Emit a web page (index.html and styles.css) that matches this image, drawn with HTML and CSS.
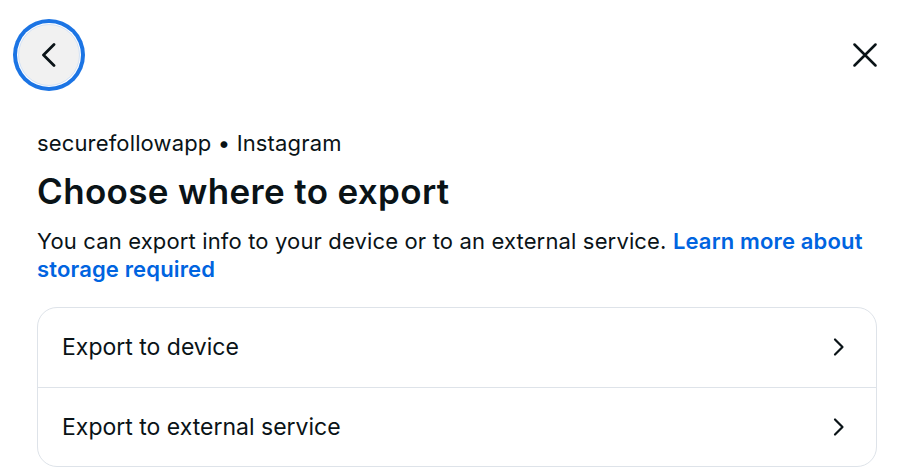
FILE: index.html
```html
<!DOCTYPE html>
<html lang="en">
<head>
<meta charset="utf-8">
<title>Choose where to export</title>
<link rel="stylesheet" href="styles.css">
</head>
<body>
<div class="page">
  <header class="header">
    <button class="back-btn" aria-label="Back">
      <svg width="24" height="24" viewBox="0 0 24 24" fill="none" stroke="#0a1317" stroke-width="2.8" stroke-linecap="round" stroke-linejoin="round"><path d="M17 1.5 L6.5 12 L17 22.5"/></svg>
    </button>
    <button class="close-btn" aria-label="Close">
      <svg width="24" height="24" viewBox="0 0 24 24" fill="none" stroke="#0a1317" stroke-width="2.5" stroke-linecap="round"><path d="M1.5 1.5 L22.5 22.5 M22.5 1.5 L1.5 22.5"/></svg>
    </button>
  </header>
  <main class="content">
    <p class="subtitle">securefollowapp • Instagram</p>
    <h1 class="title">Choose where to export</h1>
    <p class="desc">You can export info to your device or to an external service. <a class="link" href="#">Learn more about storage required</a></p>
    <div class="card">
      <div class="row">
        <span class="row-label">Export to device</span>
        <svg class="chev" width="24" height="24" viewBox="0 0 24 24" fill="none" stroke="#0a1317" stroke-width="2.2" stroke-linecap="round" stroke-linejoin="round"><path d="M7 4.5 L14.5 12 L7 19.5"/></svg>
      </div>
      <div class="row">
        <span class="row-label">Export to external service</span>
        <svg class="chev" width="24" height="24" viewBox="0 0 24 24" fill="none" stroke="#0a1317" stroke-width="2.2" stroke-linecap="round" stroke-linejoin="round"><path d="M7 4.5 L14.5 12 L7 19.5"/></svg>
      </div>
    </div>
  </main>
</div>
</body>
</html>
```
FILE: styles.css
```css
* { box-sizing: border-box; }
html, body { margin: 0; padding: 0; background: #ffffff; }
body {
  font-family: "Inter", "Noto Sans", "Liberation Sans", sans-serif;
  color: #0a1317;
}
.page { width: 912px; }
.header {
  display: flex;
  justify-content: space-between;
  align-items: flex-start;
  padding: 24px 35px 0 18px;
  height: 110px;
}
.back-btn {
  width: 62px;
  height: 62px;
  border-radius: 50%;
  background: #f1f1f1;
  border: 1px solid #d3e2f6;
  box-shadow: 0 0 0 1px #ffffff, 0 0 0 5px #1b74e4;
  display: flex;
  align-items: center;
  justify-content: center;
  padding: 0;
  cursor: pointer;
}
.close-btn {
  background: none;
  border: none;
  padding: 0;
  margin-top: 19px;
  width: 24px;
  height: 24px;
  display: flex;
  cursor: pointer;
}
.content { padding: 0 35px 0 37px; }
.subtitle {
  margin: 20px 0 15px;
  font-size: 22px;
  line-height: 26px;
  letter-spacing: 0.15px;
}
.title {
  margin: 0 0 16px;
  font-size: 35px;
  line-height: 40px;
  font-weight: 600;
  letter-spacing: 0.35px;
}
.desc {
  margin: 0 0 24px;
  font-size: 22px;
  line-height: 28px;
  letter-spacing: 0.15px;
}
.link {
  color: #0064e0;
  font-weight: 600;
  text-decoration: none;
}
.card {
  border: 1px solid #dee3e9;
  border-radius: 20px;
  overflow: hidden;
}
.row {
  height: 79px;
  display: flex;
  align-items: center;
  justify-content: space-between;
  padding: 0 24px 1px;
}
.row + .row { border-top: 1px solid #dee3e9; }
.row-label { font-size: 23px; line-height: 28px; }
.chev { flex: none; }
```
